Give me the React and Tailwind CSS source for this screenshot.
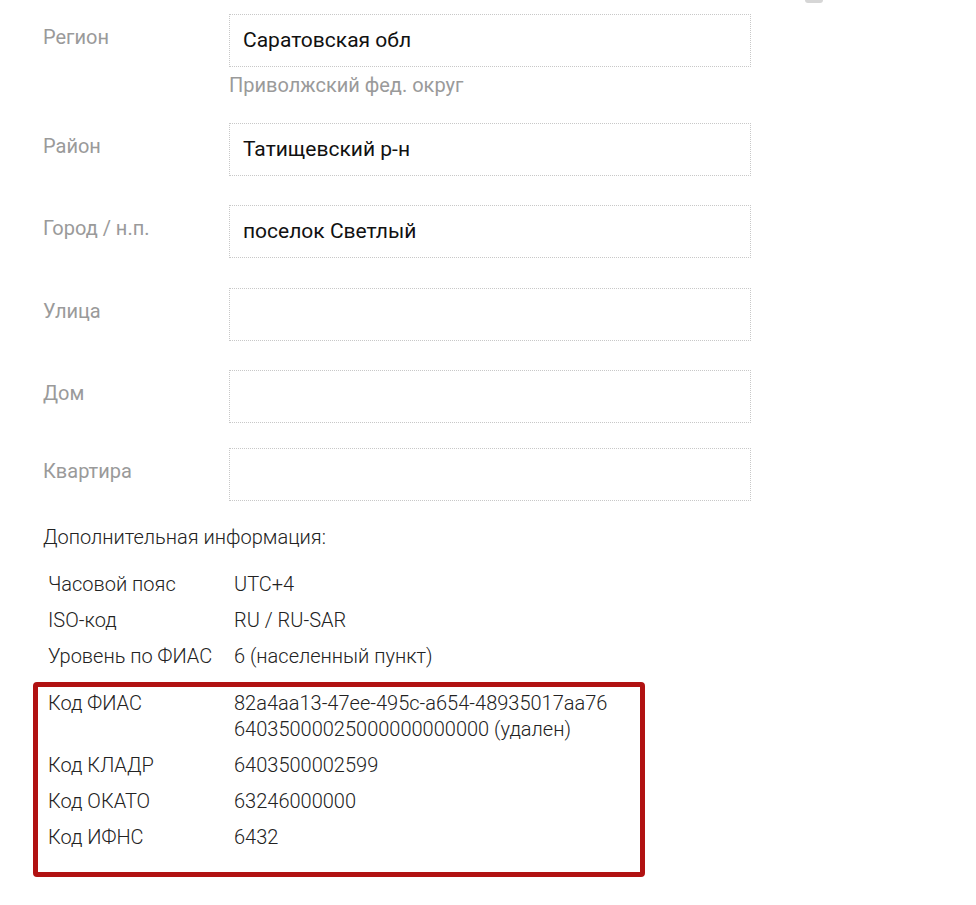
const fields = [
  { label: 'Регион', value: 'Саратовская обл', hint: 'Приволжский фед. округ' },
  { label: 'Район', value: 'Татищевский р-н' },
  { label: 'Город / н.п.', value: 'поселок Светлый' },
  { label: 'Улица', value: '' },
  { label: 'Дом', value: '' },
  { label: 'Квартира', value: '' },
];

const info = [
  ['Часовой пояс', 'UTC+4'],
  ['ISO-код', 'RU / RU-SAR'],
  ['Уровень по ФИАС', '6 (населенный пункт)'],
];

const codes = [
  ['Код ФИАС', ['82a4aa13-47ee-495c-a654-48935017aa76', '64035000025000000000000 (удален)']],
  ['Код КЛАДР', ['6403500002599']],
  ['Код ОКАТО', ['63246000000']],
  ['Код ИФНС', ['6432']],
];

function Field({ label, value, hint, mb }) {
  return (
    <div className={`flex ${mb}`}>
      <div className="w-[186px] pt-[10px] text-[20px] leading-[26px] text-[#9a9a9a]">{label}</div>
      <div>
        <div className="w-[522px] h-[53px] border border-dotted border-[#c8c8c8] pl-[13px] flex items-center text-[21px] text-[#111]">
          {value}
        </div>
        {hint && <div className="mt-[6px] text-[20px] leading-[24px] text-[#9a9a9a]">{hint}</div>}
      </div>
    </div>
  );
}

const gaps = ['mb-[26px]', 'mb-[29px]', 'mb-[30px]', 'mb-[29px]', 'mb-[25px]', ''];

export default function App() {
  return (
    <div className="relative min-h-[905px] bg-white font-['Roboto',sans-serif]">
      <div className="absolute left-[805px] top-0 w-[18px] h-[3px] rounded-b bg-[#d6d6d6]" />
      <div className="pt-[14px] pl-[43px]">
        {fields.map((f, i) => (
          <Field key={f.label} {...f} mb={gaps[i]} />
        ))}

        <div className="mt-[22px] text-[20px] leading-[28px] text-[#222] font-light">
          Дополнительная информация:
        </div>

        <div className="mt-[15px] pl-[5px] font-light text-[20px] text-[#222]">
          {info.map(([k, v]) => (
            <div key={k} className="flex h-[36px] items-center">
              <div className="w-[186px]">{k}</div>
              <div>{v}</div>
            </div>
          ))}
        </div>

        <div className="-ml-[10px] mt-[8px] w-[612px] border-[5px] border-[#b11212] rounded-[4px] pt-[3px] pb-[22px] pl-[10px] flex flex-col gap-[10px] font-light text-[20px] text-[#222]">
          {codes.map(([k, lines]) => (
            <div key={k} className="flex leading-[26px]">
              <div className="w-[186px]">{k}</div>
              <div>
                {lines.map((l) => (
                  <div key={l}>{l}</div>
                ))}
              </div>
            </div>
          ))}
        </div>
      </div>
    </div>
  );
}
